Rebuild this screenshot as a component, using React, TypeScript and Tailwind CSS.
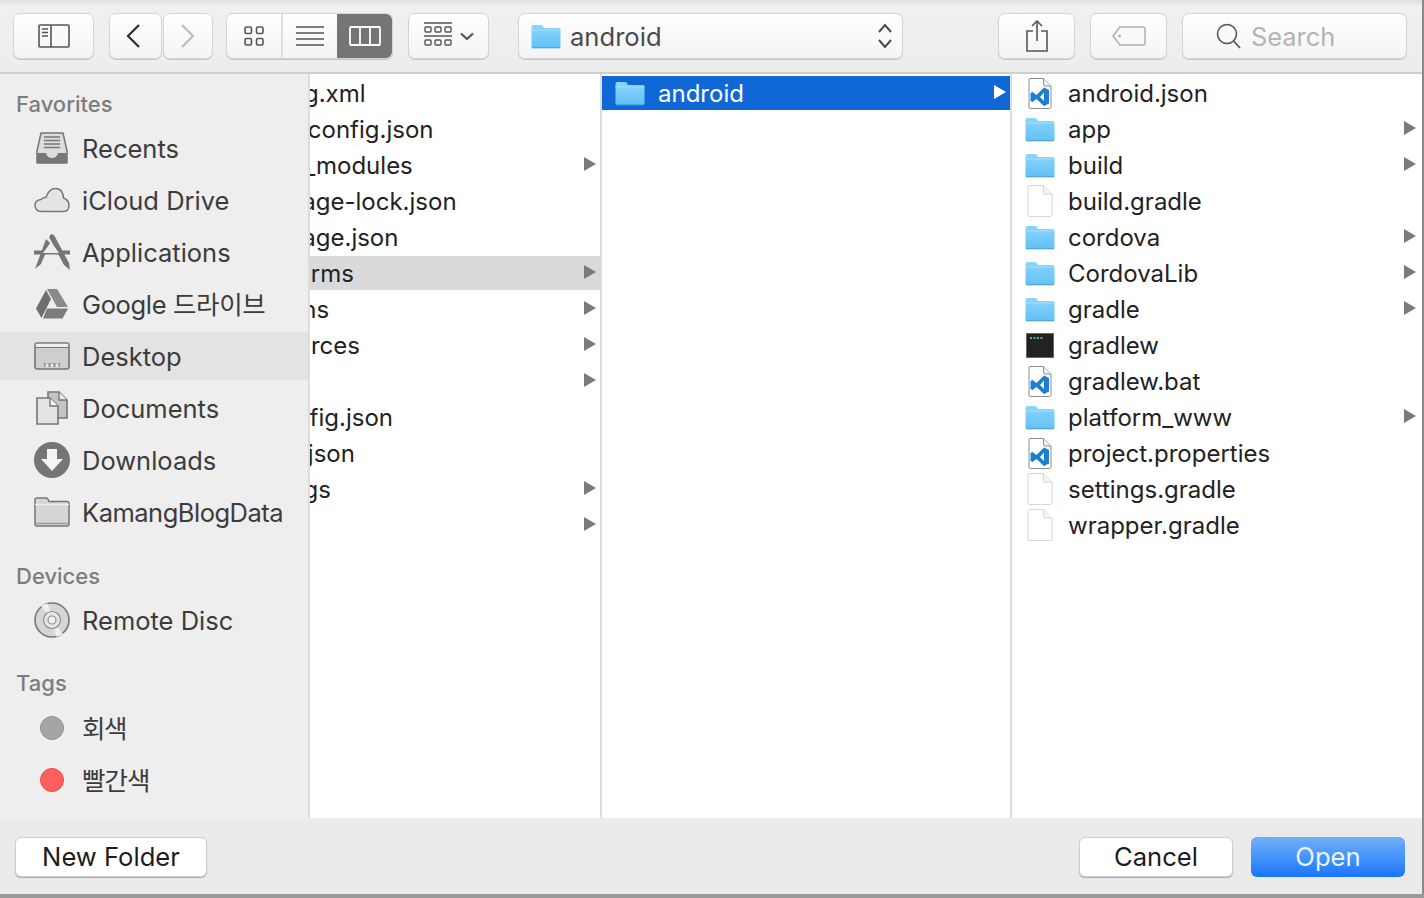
import type { ReactNode } from 'react';

const FONT = "font-['Inter','Noto_Sans_CJK_KR',sans-serif]";

function Arrow({ color = '#7b7b7b' }: { color?: string }) {
  return (
    <svg width={12} height={14} viewBox="0 0 12 14" className="mt-[-2px] shrink-0">
      <path d="M0 0 L12 7 L0 14 Z" fill={color} />
    </svg>
  );
}

function FolderIcon({ w = 30, h = 25 }: { w?: number; h?: number }) {
  return (
    <svg width={w} height={h} viewBox="0 0 30 25" className="shrink-0">
      <defs>
        <linearGradient id="blue" x1="0" y1="0" x2="0" y2="1">
          <stop offset="0" stopColor="#8ad6fd" />
          <stop offset="1" stopColor="#62c0f6" />
        </linearGradient>
      </defs>
      <path d="M0.5 3 Q0.5 1 2.5 1 H10 Q11.5 1 12.5 3 L13 4 H28 Q29.5 4 29.5 6 V22.5 Q29.5 24 28 24 H2 Q0.5 24 0.5 22.5 Z" fill="url(#blue)" />
      <path d="M0.5 6 H29.5" stroke="#a6e0fd" strokeWidth="1" />
      <path d="M1 23.8 H29" stroke="#4b9fd2" strokeWidth="1" />
    </svg>
  );
}

function BlankDoc() {
  return (
    <svg width={26} height={32} viewBox="0 0 26 32" className="shrink-0">
      <path d="M2 .5 H16.5 L25 9 V30 Q25 31.5 23.5 31.5 H2.5 Q1 31.5 1 30 V2 Q1 .5 2 .5 Z" fill="#fff" stroke="#d6d6d6" />
      <path d="M16.5 .5 V7.5 Q16.5 9 18 9 H25" fill="#f4f4f4" stroke="#d6d6d6" />
    </svg>
  );
}

function CodeDoc() {
  return (
    <svg width={24} height={31} viewBox="0 0 24 31" className="shrink-0">
      <path d="M2 .5 H15.5 L23 8 V29 Q23 30.5 21.5 30.5 H2.5 Q1 30.5 1 29 V2 Q1 .5 2 .5 Z" fill="#fff" stroke="#8c8c8c" />
      <path d="M15.5 .5 V6.5 Q15.5 8 17 8 H23" fill="#eee" stroke="#8c8c8c" />
      <path d="M16 9.5 L21 12 V25.5 L16 28 L8.5 21 L4.5 24 L2.5 23 V15 L4.5 14 L8.5 17 Z M16 14.5 L12 19 L16 23 Z" fill="#1a7fd0" fillRule="evenodd" />
    </svg>
  );
}

function TerminalIcon() {
  return (
    <svg width={28} height={25} viewBox="0 0 28 25" className="shrink-0">
      <rect x=".5" y=".5" width="27" height="24" fill="#222" stroke="#666" />
      <path d="M4 5 H6 M7.5 5 H9.5 M11 5 H13 M14.5 5 H16.5" stroke="#46c463" strokeWidth="1.8" />
    </svg>
  );
}

type Kind = 'folder' | 'code' | 'blank' | 'terminal';

const FILES: { name: string; kind: Kind }[] = [
  { name: 'android.json', kind: 'code' },
  { name: 'app', kind: 'folder' },
  { name: 'build', kind: 'folder' },
  { name: 'build.gradle', kind: 'blank' },
  { name: 'cordova', kind: 'folder' },
  { name: 'CordovaLib', kind: 'folder' },
  { name: 'gradle', kind: 'folder' },
  { name: 'gradlew', kind: 'terminal' },
  { name: 'gradlew.bat', kind: 'code' },
  { name: 'platform_www', kind: 'folder' },
  { name: 'project.properties', kind: 'code' },
  { name: 'settings.gradle', kind: 'blank' },
  { name: 'wrapper.gradle', kind: 'blank' },
];

const PROJECT: { name: string; dir?: boolean; active?: boolean }[] = [
  { name: 'config.xml' },
  { name: 'ionic.config.json' },
  { name: 'node_modules', dir: true },
  { name: 'package-lock.json' },
  { name: 'package.json' },
  { name: 'platforms', dir: true, active: true },
  { name: 'plugins', dir: true },
  { name: 'resources', dir: true },
  { name: 'src', dir: true },
  { name: 'tsconfig.json' },
  { name: 'tslint.json' },
  { name: 'typings', dir: true },
  { name: 'www', dir: true },
];

function FileGlyph({ kind }: { kind: Kind }) {
  if (kind === 'folder') return <FolderIcon />;
  if (kind === 'code') return <CodeDoc />;
  if (kind === 'terminal') return <TerminalIcon />;
  return <BlankDoc />;
}

function ToolButton({ className, children }: { className: string; children: ReactNode }) {
  return (
    <div className={`flex h-[46px] shrink-0 items-center justify-center rounded-[7px] border border-[#d4d4d4] bg-gradient-to-b from-white to-[#f4f4f4] shadow-[0_1px_0_#c4c4c4] ${className}`}>
      {children}
    </div>
  );
}

function SideRow({ label, icon, active, textClass = '' }: { label: string; icon: ReactNode; active?: boolean; textClass?: string }) {
  return (
    <div className={`mb-1 flex h-12 items-center pl-[34px] ${active ? 'bg-[#e3e3e3]' : ''}`}>
      <div className="flex w-9 shrink-0 items-center justify-center">{icon}</div>
      <span className={`mt-[2px] ml-3 text-[25.5px] whitespace-nowrap text-[#3c3c3c] ${textClass}`}>{label}</span>
    </div>
  );
}

function SideHeader({ label, className }: { label: string; className: string }) {
  return <div className={`pl-4 text-[22px] leading-6 font-medium text-[#7d7d7d] ${className}`}>{label}</div>;
}

const G = '#767676';

const sideIcons = {
  recents: (
    <svg width={32} height={32} viewBox="0 0 32 32">
      <path d="M5 1 H27 L31 19 V31 H1 V19 Z" fill="#dcdcdc" stroke={G} strokeWidth="1.5" strokeLinejoin="round" />
      <path d="M8 5 H24 M8 8.5 H24 M8 12 H24 M8 15.5 H24" stroke={G} strokeWidth="1.5" />
      <path d="M1 21 H10 Q11 26 16 26 Q21 26 22 21 H31 V31 H1 Z" fill={G} />
    </svg>
  ),
  cloud: (
    <svg width={36} height={26} viewBox="0 0 36 26">
      <path d="M8 24.5 Q1 24.5 1 18.5 Q1 13 7 12.5 Q10 10 12 10.5 Q15 1 22 1.5 Q29 2 29.5 11 Q35 13 35 18.5 Q35 24.5 29 24.5 Z" fill="#e4e4e4" stroke={G} strokeWidth="1.4" />
    </svg>
  ),
  apps: (
    <svg width={36} height={36} viewBox="0 0 36 36">
      <path d="M0 16.5 H36 V20.5 H0 Z" fill={G} />
      <path d="M12 5 L1 35 L7 30 L16 9 Z" fill={G} />
      <path d="M17 0 L20 1 L35 29 L36 36 L30 31 L15 3 Z" fill={G} />
      <path d="M9 19 L17 8 L25 19 Z" fill="#eeeeee" />
    </svg>
  ),
  drive: (
    <svg width={32} height={30} viewBox="0 0 32 30">
      <path d="M11 0 H21 L32 18 L27 18 H21 Z" fill="#8a8a8a" />
      <path d="M10 1 L15 10 L5.5 29 L0 19.5 Z" fill="#6f6f6f" />
      <path d="M11 19.5 H32 L26.5 29.5 H7 Z" fill="#7c7c7c" />
    </svg>
  ),
  desktop: (
    <svg width={36} height={28} viewBox="0 0 36 28">
      <rect x="1" y="1" width="34" height="26" rx="2.5" fill="#cfcfcf" stroke={G} strokeWidth="1.6" />
      <rect x="1.8" y="1.8" width="32.4" height="3.5" fill="#efefef" />
      <path d="M1 5.5 H35" stroke={G} strokeWidth="1.2" />
      <path d="M10 25 V21 H26 V25 Z" fill="#8c8c8c" />
      <path d="M13 21.5 V25 M18 21.5 V25 M23 21.5 V25" stroke="#e6e6e6" strokeWidth="3" />
    </svg>
  ),
  documents: (
    <svg width={32} height={34} viewBox="0 0 32 34">
      <path d="M12 1 H23 L31 9 V27 H12 Z" fill="#c4c4c4" stroke={G} strokeWidth="1.6" />
      <path d="M23 1 V9 H31" fill="#eee" stroke={G} strokeWidth="1.4" />
      <path d="M1 7 H14 L22 15 V33 H1 Z" fill="#e4e4e4" stroke={G} strokeWidth="1.6" />
      <path d="M14 7 V15 H22" fill="#fafafa" stroke={G} strokeWidth="1.4" />
    </svg>
  ),
  downloads: (
    <svg width={36} height={36} viewBox="0 0 36 36">
      <circle cx="18" cy="18" r="18" fill="#757575" />
      <path d="M13 7 H23 V17 H29 L18 29 L7 17 H13 Z" fill="#f4f4f4" />
    </svg>
  ),
  folder: (
    <svg width={36} height={30} viewBox="0 0 36 30">
      <path d="M1 3 Q1 1 3 1 H12 Q13.5 1 14.5 3 L15 4.5 H33 Q35 4.5 35 6.5 V27 Q35 29 33 29 H3 Q1 29 1 27 Z" fill="#d6d6d6" stroke={G} strokeWidth="1.5" />
      <path d="M1 7.5 H35" stroke="#f0f0f0" strokeWidth="1.4" />
      <path d="M1.5 26.5 H34.5" stroke="#9c9c9c" strokeWidth="1.6" />
    </svg>
  ),
  disc: (
    <svg width={36} height={36} viewBox="0 0 36 36">
      <circle cx="18" cy="18" r="17" fill="#d6d6d6" stroke={G} strokeWidth="1.6" />
      <path d="M18 18 L7 4 A17 17 0 0 1 14 1.5 Z M18 18 L29 32 A17 17 0 0 1 22 34.5 Z" fill="#eeeeee" />
      <circle cx="18" cy="18" r="8.5" fill="#e6e6e6" stroke="#8c8c8c" strokeWidth="1.2" />
      <circle cx="18" cy="18" r="4" fill="#f2f2f2" stroke="#8c8c8c" strokeWidth="1.2" />
    </svg>
  ),
};

export default function App() {
  return (
    <div className={`flex h-[898px] w-[1424px] flex-col overflow-hidden bg-[#8a8a8a] ${FONT}`}>
      <div className="flex min-h-0 flex-1">
        <div className="flex w-[1422px] shrink-0 flex-col">
          {/* Toolbar */}
          <div className="h-[74px] shrink-0 border-b-2 border-[#cfcfcf] bg-gradient-to-b from-[#dedede] via-[#f0f0f0] via-[8%] to-[#ededed] pt-[13px]">
            <div className="flex items-start pl-[13px]">
              <ToolButton className="w-[81px]">
                <svg width={32} height={24} viewBox="0 0 32 24">
                  <rect x="1" y="1" width="30" height="22" rx="1" fill="none" stroke="#555" strokeWidth="1.6" />
                  <path d="M13 1 V23" stroke="#555" strokeWidth="1.6" />
                  <path d="M4 5 H10 M4 8.5 H10 M4 12 H10" stroke="#555" strokeWidth="1.6" />
                </svg>
              </ToolButton>
              <ToolButton className="ml-[15px] w-[53px] pr-[6px]">
                <svg width={14} height={24} viewBox="0 0 14 24">
                  <path d="M13 1 L2 12 L13 23" fill="none" stroke="#2c2c2c" strokeWidth="2.2" />
                </svg>
              </ToolButton>
              <ToolButton className="ml-px w-[50px]">
                <svg width={14} height={24} viewBox="0 0 14 24">
                  <path d="M1 1 L12 12 L1 23" fill="none" stroke="#bcbcbc" strokeWidth="2.2" />
                </svg>
              </ToolButton>
              <div className="ml-[13px] flex h-[46px] w-[167px] shrink-0 overflow-hidden rounded-[7px] border border-[#d4d4d4] bg-gradient-to-b from-white to-[#f4f4f4] shadow-[0_1px_0_#c4c4c4]">
                <div className="flex w-[56px] items-center justify-center border-r-2 border-[#dedede]">
                  <svg width={20} height={20} viewBox="0 0 20 20">
                    <g fill="none" stroke="#555" strokeWidth="1.6">
                      <rect x="1" y="1" width="6.5" height="6.5" rx="1.5" />
                      <rect x="12.5" y="1" width="6.5" height="6.5" rx="1.5" />
                      <rect x="1" y="12.5" width="6.5" height="6.5" rx="1.5" />
                      <rect x="12.5" y="12.5" width="6.5" height="6.5" rx="1.5" />
                    </g>
                  </svg>
                </div>
                <div className="flex w-[54px] items-center justify-center">
                  <svg width={28} height={20} viewBox="0 0 28 20">
                    <path d="M0 1 H28 M0 7 H28 M0 13 H28 M0 19 H28" stroke="#555" strokeWidth="1.5" />
                  </svg>
                </div>
                <div className="flex flex-1 items-center justify-center bg-[#757575]">
                  <svg width={32} height={20} viewBox="0 0 32 20">
                    <rect x="1" y="1" width="30" height="18" rx="1" fill="none" stroke="#fff" strokeWidth="1.8" />
                    <path d="M11 1 V19 M21 1 V19" stroke="#fff" strokeWidth="1.8" />
                  </svg>
                </div>
              </div>
              <ToolButton className="ml-[15px] w-[81px] gap-2">
                <svg width={28} height={28} viewBox="0 0 28 28">
                  <path d="M0 1 H28 M0 14 H28" stroke="#555" strokeWidth="1.5" />
                  <g fill="none" stroke="#555" strokeWidth="1.4">
                    <rect x="1" y="5" width="6" height="5" rx="1" />
                    <rect x="11" y="5" width="6" height="5" rx="1" />
                    <rect x="21" y="5" width="6" height="5" rx="1" />
                    <rect x="1" y="18" width="6" height="5" rx="1" />
                    <rect x="11" y="18" width="6" height="5" rx="1" />
                    <rect x="21" y="18" width="6" height="5" rx="1" />
                  </g>
                </svg>
                <svg width={14} height={9} viewBox="0 0 14 9">
                  <path d="M1 1.5 L7 7 L13 1.5" fill="none" stroke="#555" strokeWidth="2.2" />
                </svg>
              </ToolButton>
              <ToolButton className="ml-[29px] w-[385px] justify-start pl-[12px]">
                <FolderIcon w={30} h={25} />
                <span className="mt-[2px] ml-[9px] text-[25.6px] text-[#4a4a4a]">android</span>
                <svg width={16} height={26} viewBox="0 0 16 26" className="mr-[9px] ml-auto">
                  <path d="M2 9 L8 2 L14 9 M2 17 L8 24 L14 17" fill="none" stroke="#4a4a4a" strokeWidth="2" />
                </svg>
              </ToolButton>
              <ToolButton className="ml-[95px] w-[77px]">
                <svg width={24} height={32} viewBox="0 0 24 32">
                  <path d="M8 11 H2 V31 H22 V11 H16" fill="none" stroke="#555" strokeWidth="1.6" />
                  <path d="M12 1 V21 M7 6 L12 1 L17 6" fill="none" stroke="#555" strokeWidth="1.6" />
                </svg>
              </ToolButton>
              <ToolButton className="ml-[15px] w-[77px]">
                <svg width={34} height={20} viewBox="0 0 34 20">
                  <path d="M8 1 H31 Q33 1 33 3 V17 Q33 19 31 19 H8 L1 10 Z" fill="none" stroke="#b0b0b0" strokeWidth="1.5" />
                  <circle cx="7.5" cy="10" r="1.4" fill="#b0b0b0" />
                </svg>
              </ToolButton>
              <ToolButton className="ml-[15px] w-[225px] justify-start pl-[33px]">
                <svg width={26} height={26} viewBox="0 0 26 26">
                  <circle cx="11" cy="11" r="9.5" fill="none" stroke="#555" strokeWidth="1.6" />
                  <path d="M17.5 18 L24 25" stroke="#555" strokeWidth="1.8" />
                </svg>
                <span className="mt-[2px] ml-[9px] text-[25.4px] text-[#b4b4b4]">Search</span>
              </ToolButton>
            </div>
          </div>

          {/* Browser */}
          <div className="flex min-h-0 flex-1">
            <div className="w-[308px] shrink-0 bg-[#eeeeee]">
              <SideHeader label="Favorites" className="mt-[18px] mb-2" />
              <SideRow label="Recents" icon={sideIcons.recents} />
              <SideRow label="iCloud Drive" icon={sideIcons.cloud} />
              <SideRow label="Applications" icon={sideIcons.apps} />
              <SideRow label="Google 드라이브" icon={sideIcons.drive} textClass="tracking-[-0.35px]" />
              <SideRow label="Desktop" icon={sideIcons.desktop} active />
              <SideRow label="Documents" icon={sideIcons.documents} />
              <SideRow label="Downloads" icon={sideIcons.downloads} />
              <SideRow label="KamangBlogData" icon={sideIcons.folder} textClass="tracking-[-0.5px]" />
              <SideHeader label="Devices" className="mt-[28px] mb-2" />
              <SideRow label="Remote Disc" icon={sideIcons.disc} />
              <SideHeader label="Tags" className="mt-[27px] mb-[9px]" />
              <SideRow label="회색" textClass="tracking-[-1.4px]" icon={<div className="h-6 w-6 rounded-full border border-[#909090] bg-[#a5a5a5]" />} />
              <SideRow label="빨간색" textClass="tracking-[-1px]" icon={<div className="h-6 w-6 rounded-full border border-[#f94848] bg-[#ff5f5f]" />} />
            </div>
            <div className="w-[2px] shrink-0 bg-[#dddddd]" />

            <div className="w-[290px] shrink-0 overflow-hidden bg-white pt-[2px]">
              {PROJECT.map((row) => (
                <div key={row.name} className={`mb-[2px] flex h-[34px] items-center pr-1 ${row.active ? 'bg-[#dadada]' : ''}`}>
                  <div className="min-w-0 flex-1 overflow-hidden">
                    <span className="mt-[2px] ml-[-63px] block text-[24px] leading-[34px] whitespace-nowrap text-[#222222]">{row.name}</span>
                  </div>
                  {row.dir && <Arrow />}
                </div>
              ))}
            </div>
            <div className="w-[2px] shrink-0 bg-[#dddddd]" />

            <div className="w-[408px] shrink-0 bg-white pt-[2px]">
              <div className="flex h-[34px] items-center bg-[#1068d6] pr-1 pl-[13px]">
                <FolderIcon />
                <span className="mt-[2px] ml-[13px] flex-1 text-[24px] text-white">android</span>
                <Arrow color="#ffffff" />
              </div>
            </div>
            <div className="w-[2px] shrink-0 bg-[#dddddd]" />

            <div className="min-w-0 flex-1 bg-white pt-[2px]">
              {FILES.map((file) => (
                <div key={file.name} className="mb-[2px] flex h-[34px] items-center pr-[6px] pl-[13px]">
                  <div className="flex w-[30px] shrink-0 items-center justify-center">
                    <FileGlyph kind={file.kind} />
                  </div>
                  <span className="mt-[2px] ml-[13px] flex-1 text-[24px] whitespace-nowrap text-[#222222]">{file.name}</span>
                  {file.kind === 'folder' && <Arrow />}
                </div>
              ))}
            </div>
          </div>

          {/* Footer */}
          <div className="flex h-[76px] shrink-0 items-start bg-[#ebebeb] pt-[19px] pr-[17px] pl-[15px]">
            <button className="h-10 w-[192px] rounded-[6px] border border-[#cfcfcf] bg-white text-[25.6px] text-[#1c1c1c] shadow-[0_1px_1px_#aaaaaa]">
              New Folder
            </button>
            <button className="ml-auto h-10 w-[154px] rounded-[6px] border border-[#cfcfcf] bg-white text-[25.6px] text-[#1c1c1c] shadow-[0_1px_1px_#aaaaaa]">
              Cancel
            </button>
            <button className="ml-[18px] h-10 w-[154px] rounded-[6px] bg-gradient-to-b from-[#6fb0f8] to-[#1674fb] text-[25.6px] text-[#eef5ff]">
              Open
            </button>
          </div>
        </div>
      </div>
      <div className="h-1 shrink-0 bg-[#9a9a9a]" />
    </div>
  );
}
